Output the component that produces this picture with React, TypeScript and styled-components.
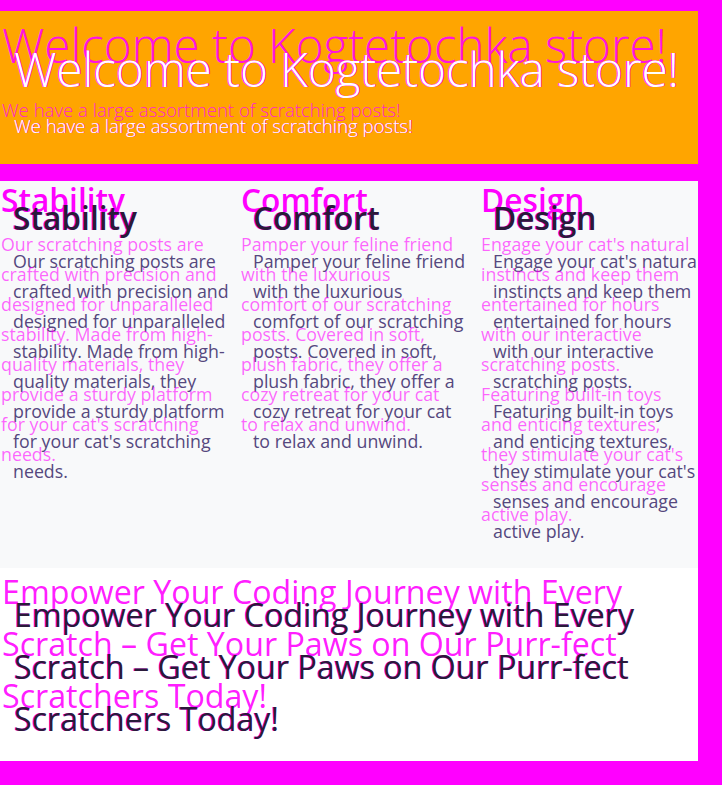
import React from "react";
import styled, { createGlobalStyle } from "styled-components";

const GlobalStyle = createGlobalStyle`
  html, body {
    margin: 0;
    padding: 0;
    background: #ff00ff;
  }
  body {
    font-family: "Segoe UI", "Open Sans", "Noto Sans", sans-serif;
  }
  * { box-sizing: border-box; }
`;

const Page = styled.div`
  width: 698px;
  padding-top: 11px;
  overflow: hidden;
`;

const Hero = styled.header`
  height: 153px;
  background: #ffa500;
  padding: 30px 14px 0;
`;

const Title = styled.h1`
  margin: 0;
  font-size: 47.5px;
  line-height: 56px;
  font-weight: 300;
  color: #ffffff;
  white-space: nowrap;
  text-shadow: -12px -24px 0 rgba(255, 0, 255, 0.9), 0.8px 0 0 #ff00ff, -0.8px 0 0 #ff00ff;
`;

const Subtitle = styled.p`
  margin: 15px 0 0;
  font-size: 18.6px;
  line-height: 28px;
  font-weight: 300;
  color: #ffffff;
  white-space: nowrap;
  text-shadow: -12px -16px 0 rgba(255, 0, 255, 0.8), 0.6px 0 0 #ff00ff;
`;

const Features = styled.section`
  margin-top: 17px;
  background: #f8f9fa;
  height: 387px;
  padding: 18px 0 0;
  display: grid;
  grid-template-columns: repeat(3, 240px);
  overflow: hidden;
`;

const Feature = styled.div`
  padding: 0 0 0 13px;
`;

const FeatureTitle = styled.h3`
  margin: 0;
  font-size: 31.7px;
  line-height: 38px;
  font-weight: 600;
  color: #2a1a3a;
  text-shadow: -12px -18px 0 #ff00ff, -1px 0 0 #ff00ff;
`;

const FeatureText = styled.p`
  margin: 9px 0 0;
  font-size: 17.8px;
  line-height: 30px;
  font-weight: 400;
  color: #55487e;
  width: 216px;
  text-shadow: -12px -17px 0 rgba(255, 0, 255, 0.6);
`;

const Closing = styled.section`
  background: #ffffff;
  height: 193px;
  padding: 21px 14px 0;
`;

const ClosingTitle = styled.h2`
  margin: 0;
  font-size: 32.2px;
  line-height: 52px;
  font-weight: 400;
  color: #2a1a3a;
  text-shadow: -12px -23px 0 rgba(255, 0, 255, 0.9), -0.8px 0 0 #ff00ff;
`;

const features = [
  {
    title: "Stability",
    text: "Our scratching posts are crafted with precision and designed for unparalleled stability. Made from high-quality materials, they provide a sturdy platform for your cat's scratching needs.",
  },
  {
    title: "Comfort",
    text: "Pamper your feline friend with the luxurious comfort of our scratching posts. Covered in soft, plush fabric, they offer a cozy retreat for your cat to relax and unwind.",
  },
  {
    title: "Design",
    text: "Engage your cat's natural instincts and keep them entertained for hours with our interactive scratching posts. Featuring built-in toys and enticing textures, they stimulate your cat's senses and encourage active play.",
  },
];

export default function App() {
  return (
    <>
      <GlobalStyle />
      <Page>
        <Hero>
          <Title>Welcome to Kogtetochka store!</Title>
          <Subtitle>We have a large assortment of scratching posts!</Subtitle>
        </Hero>
        <Features>
          {features.map((f) => (
            <Feature key={f.title}>
              <FeatureTitle>{f.title}</FeatureTitle>
              <FeatureText>{f.text}</FeatureText>
            </Feature>
          ))}
        </Features>
        <Closing>
          <ClosingTitle>
            Empower Your Coding Journey with Every Scratch – Get Your Paws on Our Purr-fect Scratchers Today!
          </ClosingTitle>
        </Closing>
      </Page>
    </>
  );
}
